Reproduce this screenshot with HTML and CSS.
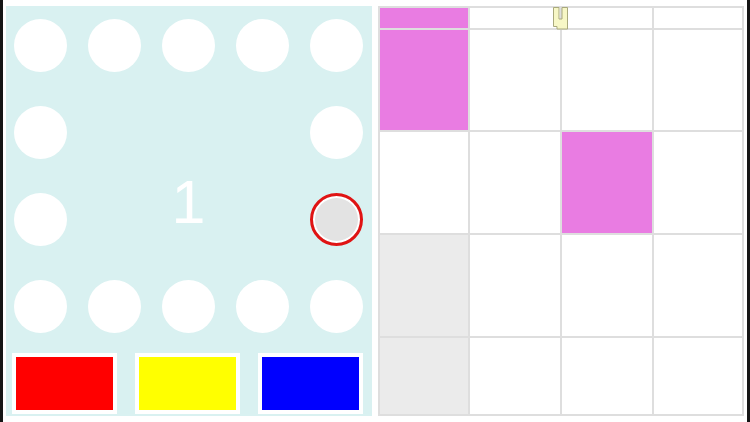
FILE: index.html
```html
<!DOCTYPE html>
<html>
<head>
<meta charset="utf-8">
<link rel="stylesheet" href="styles.css">
</head>
<body>
<div class="frame">
  <div class="board">
    <div class="ring">
      <div class="dot"></div><div class="dot"></div><div class="dot"></div><div class="dot"></div><div class="dot"></div>
      <div class="dot c1 r2"></div><div class="dot c5 r2"></div>
      <div class="dot c1 r3"></div><div class="dot c5 r3 sel"></div>
      <div class="dot c1 r4"></div><div class="dot c2 r4"></div><div class="dot c3 r4"></div><div class="dot c4 r4"></div><div class="dot c5 r4"></div>
      <div class="num">1</div>
    </div>
    <div class="swatches">
      <div class="sw red"></div>
      <div class="sw yellow"></div>
      <div class="sw blue"></div>
    </div>
  </div>
  <div class="gridwrap">
    <div class="grid">
      <div class="cell pink"></div><div class="cell"></div><div class="cell"></div><div class="cell"></div>
      <div class="cell pink"></div><div class="cell"></div><div class="cell"></div><div class="cell"></div>
      <div class="cell"></div><div class="cell"></div><div class="cell pink"></div><div class="cell"></div>
      <div class="cell gray"></div><div class="cell"></div><div class="cell"></div><div class="cell"></div>
      <div class="cell gray"></div><div class="cell"></div><div class="cell"></div><div class="cell"></div>
    </div>
    <svg class="marker" width="15" height="23" viewBox="0 0 15 23">
      <polygon points="0.5,0.5 6,0.5 6,12 9,12 9,0.5 14.5,0.5 14.5,22 4,22 4,19.5 0.5,19.5" fill="#f7f7c6" stroke="#a9a97c" stroke-width="1"/>
    </svg>
  </div>
</div>
</body>
</html>
```
FILE: styles.css
```css
html, body {
  margin: 0;
  padding: 0;
  background: #ffffff;
}
.frame {
  width: 750px;
  height: 422px;
  box-sizing: border-box;
  border-left: 3px solid #151515;
  border-right: 3px solid #151515;
  padding: 6px 3px;
  display: flex;
  gap: 6px;
  font-family: "Liberation Sans", Arial, sans-serif;
}
.board {
  width: 366px;
  height: 410px;
  background: #d9f1f1;
  display: flex;
  flex-direction: column;
}
.ring {
  display: grid;
  grid-template-columns: repeat(5, 53px);
  grid-template-rows: repeat(4, 53px);
  column-gap: 21px;
  row-gap: 34px;
  padding: 13px 0 0 8px;
}
.dot {
  width: 53px;
  height: 53px;
  border-radius: 50%;
  background: #ffffff;
}
.c1 { grid-column: 1; }
.c2 { grid-column: 2; }
.c3 { grid-column: 3; }
.c4 { grid-column: 4; }
.c5 { grid-column: 5; }
.r2 { grid-row: 2; }
.r3 { grid-row: 3; }
.r4 { grid-row: 4; }
.dot.sel {
  box-sizing: border-box;
  background: #e3e3e3;
  border: 3px solid #e01414;
  box-shadow: inset 0 0 0 2px #ffffff;
}
.num {
  grid-column: 2 / 5;
  grid-row: 3;
  align-self: center;
  justify-self: center;
  color: #ffffff;
  font-size: 61px;
  line-height: 61px;
  margin-bottom: 34px;
}
.swatches {
  display: flex;
  gap: 18px;
  padding: 0 0 0 6px;
  margin-top: 20px;
}
.sw {
  width: 105px;
  height: 61px;
  box-sizing: border-box;
  border: 4px solid #ffffff;
}
.red { background: #ff0000; }
.yellow { background: #ffff00; }
.blue { background: #0000ff; }
.gridwrap {
  position: relative;
  width: 366px;
  height: 410px;
}
.grid {
  display: grid;
  grid-template-columns: 88px 90px 90px 88px;
  grid-template-rows: 20px 100px 101px 101px 76px;
  gap: 2px;
  padding: 2px;
  background: #dedede;
  height: 410px;
  box-sizing: border-box;
}
.cell { background: #ffffff; }
.cell.pink { background: #e97ce2; }
.cell.gray { background: #ebebeb; }
.marker {
  position: absolute;
  left: 175px;
  top: 1px;
}
```
